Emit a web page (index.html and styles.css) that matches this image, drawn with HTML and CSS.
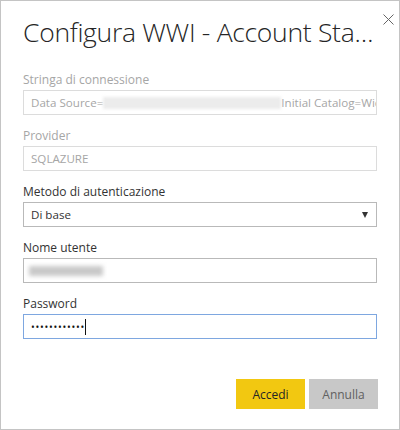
FILE: index.html
```html
<!DOCTYPE html>
<html lang="it">
<head>
<meta charset="utf-8">
<link rel="stylesheet" href="styles.css">
</head>
<body>
<div class="dialog">
  <div class="close" aria-label="Chiudi">
    <svg width="11" height="11" viewBox="0 0 11 11"><path d="M0.5 0.5 L10.5 10.5 M10.5 0.5 L0.5 10.5" stroke="#666" stroke-width="1" fill="none"/></svg>
  </div>
  <h1 class="title">Configura WWI - Account Statements</h1>
  <div class="form">
    <div class="field disabled">
      <div class="label">Stringa di connessione</div>
      <div class="input"><span class="text">Data Source=</span><span class="blur-light"></span><span class="text">Initial Catalog=WideWorldImporters</span></div>
    </div>
    <div class="field disabled">
      <div class="label">Provider</div>
      <div class="input"><span class="text">SQLAZURE</span></div>
    </div>
    <div class="field">
      <div class="label">Metodo di autenticazione</div>
      <div class="input select"><span class="text">Di base</span><span class="arrow"></span></div>
    </div>
    <div class="field">
      <div class="label">Nome utente</div>
      <div class="input"><span class="blur-dark"></span></div>
    </div>
    <div class="field">
      <div class="label">Password</div>
      <div class="input focused"><span class="dots">••••••••••••</span><span class="caret"></span></div>
    </div>
  </div>
  <div class="actions">
    <button class="btn primary">Accedi</button>
    <button class="btn secondary">Annulla</button>
  </div>
</div>
</body>
</html>
```
FILE: styles.css
```css
* { box-sizing: border-box; }
html, body { margin: 0; padding: 0; background: #fff; }
body { font-family: "Open Sans", "Noto Sans", "DejaVu Sans", sans-serif; }
.dialog {
  position: relative;
  width: 400px;
  height: 430px;
  border: 1px solid #c4c4c4;
  padding: 0 0 0 22px;
  background: #fff;
}
.close {
  position: absolute;
  left: 382px;
  top: 13px;
  width: 11px;
  height: 11px;
  line-height: 0;
}
.title {
  margin: 0;
  padding-top: 12px;
  height: 58px;
  width: 356px;
  font-size: 26.5px;
  font-weight: 300;
  line-height: 38px;
  color: #252525;
  white-space: nowrap;
  overflow: hidden;
  text-overflow: ellipsis;
  letter-spacing: -0.3px;
}
.form { display: flex; flex-direction: column; width: 354px; margin-top: 13px; }
.field { display: flex; flex-direction: column; margin-bottom: 13px; }
.label {
  font-size: 12px;
  line-height: 16px;
  height: 16px;
  color: #333;
  margin-bottom: 2px;
}
.field.disabled .label { color: #a6a6a6; }
.input {
  height: 25px;
  border: 1px solid #b9b9b9;
  display: flex;
  align-items: center;
  padding: 0 7px;
  overflow: hidden;
  white-space: nowrap;
  font-size: 11.6px;
  color: #333;
}
.field.disabled .input { border-color: #dcdcdc; color: #a6a6a6; }
.text { flex: none; }
.blur-light {
  flex: none;
  width: 178px;
  height: 12px;
  background: #ececec;
  filter: blur(1.5px);
}
.blur-dark {
  flex: none;
  width: 74px;
  height: 10px;
  background: #c9c9c9;
  filter: blur(2px);
  margin-left: -2px;
}
.select { justify-content: space-between; }
.arrow {
  width: 0; height: 0;
  border-left: 3px solid transparent;
  border-right: 3px solid transparent;
  border-top: 6px solid #333;
  margin-right: 1px;
}
.focused { border-color: #7ea7e0; }
.dots { font-size: 10px; letter-spacing: 0.75px; color: #111; }
.caret { width: 1px; height: 16px; background: #111; margin-left: 0; }
.actions {
  display: flex;
  justify-content: flex-end;
  gap: 4px;
  width: 355px;
  margin-top: 27px;
}
.btn {
  width: 69px;
  height: 30px;
  border: none;
  font-family: inherit;
  font-size: 12px;
  padding: 0;
  cursor: pointer;
}
.primary { background: #f2c811; color: #252525; }
.secondary { background: #c8c8c8; color: #606060; }
```
